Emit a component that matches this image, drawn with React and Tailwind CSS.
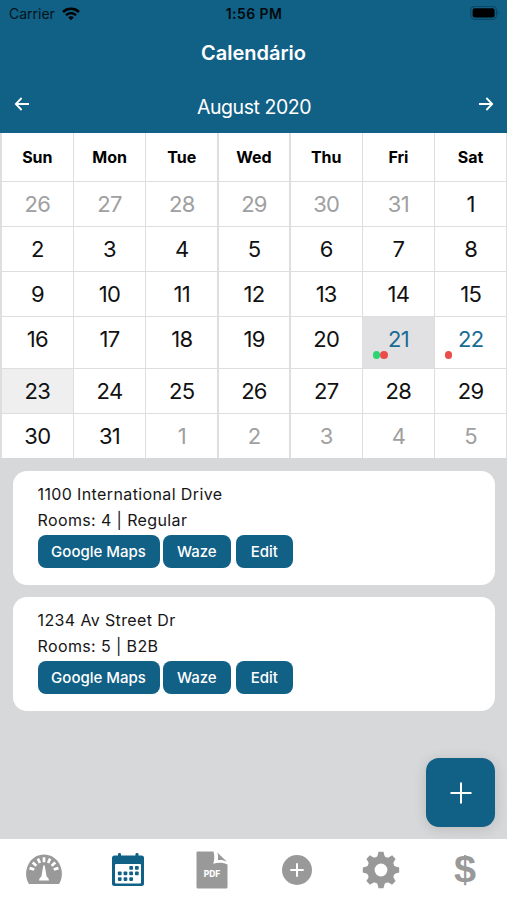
const weekDays = ["Sun", "Mon", "Tue", "Wed", "Thu", "Fri", "Sat"]

const weeks = [
  { height: "h-[45px]", days: [26, 27, 28, 29, 30, 31, 1] },
  { height: "h-[45px]", days: [2, 3, 4, 5, 6, 7, 8] },
  { height: "h-[45px]", days: [9, 10, 11, 12, 13, 14, 15] },
  { height: "h-[52px]", days: [16, 17, 18, 19, 20, 21, 22] },
  { height: "h-[45px]", days: [23, 24, 25, 26, 27, 28, 29] },
  { height: "h-[45px]", days: [30, 31, 1, 2, 3, 4, 5] },
]

const events = {
  21: ["bg-[#2ed573]", "bg-[#eb4d4b]"],
  22: ["bg-[#eb4d4b]"],
}

const appointments = [
  { address: "1100 International Drive", rooms: 4, type: "Regular" },
  { address: "1234 Av Street Dr", rooms: 5, type: "B2B" },
]

const StatusBar = () => (
  <div className="h-7 pl-[9px] pr-2 pb-px flex items-center justify-between text-black">
    <div className="w-40 flex items-center gap-[7px] text-[14px]">
      <span className="opacity-80">Carrier</span>
      <svg width="18" height="14" viewBox="0 0 18 14" fill="none" stroke="currentColor">
        <path d="M1 5C5.5 0.8 12.5 0.8 17 5" strokeWidth="2.5" />
        <path d="M4 8.2C6.9 5.6 11.1 5.6 14 8.2" strokeWidth="2.4" />
        <path d="M9 13.2L6.2 10.3C7.8 9 10.2 9 11.8 10.3Z" fill="currentColor" stroke="none" />
      </svg>
    </div>
    <span className="text-[14px] font-semibold tracking-[0.4px] opacity-90">1:56 PM</span>
    <div className="w-40 flex justify-end">
      <svg width="30" height="15" viewBox="0 0 30 15">
        <rect x="1.8" y="0.3" width="25.6" height="13" rx="4" fill="none" stroke="#0b4766" strokeWidth="1.2" />
        <rect x="3.6" y="2.2" width="22" height="9.3" rx="2.2" fill="#000" />
        <path d="M28.5 4.5C30 5.5 30 8.1 28.5 9.1Z" fill="#0b4766" />
      </svg>
    </div>
  </div>
)

const Arrow = ({ flip }) => (
  <svg width="16" height="14" viewBox="0 0 16 14" fill="none" stroke="white" strokeWidth="1.8" className={flip ? "rotate-180" : ""}>
    <path d="M15 7H2M7.6 1L1.8 7L7.6 13" />
  </svg>
)

const Day = ({ day, weekIndex }) => {
  const outside = (weekIndex === 0 && day > 20) || (weekIndex === 5 && day < 10)
  const dots = outside ? null : events[day]
  let color = "text-[#111111]"
  if (outside) color = "text-[#a0a0a0]"
  if (dots) color = "text-[#1a6a96]"
  let background = "bg-white"
  if (day === 21) background = "bg-[#e1e1e3]"
  if (day === 23) background = "bg-[#efefef]"

  return (
    <div className={`relative flex justify-center pt-[7px] text-[22px] leading-[30px] tracking-[-0.7px] ${background} ${color}`}>
      <span>{day}</span>
      {dots && (
        <div className="absolute left-[9.5px] top-[34px] flex">
          {dots.map((dot) => (
            <span key={dot} className={`w-[7.5px] h-[7.5px] rounded-full ${dot}`}></span>
          ))}
        </div>
      )}
    </div>
  )
}

const Appointment = ({ address, rooms, type }) => (
  <div className="h-[114px] rounded-[14px] bg-white pl-[25px] pt-[10px] text-[16px] leading-[26px] text-[#161616]">
    <p className="tracking-[0.38px]">{address}</p>
    <p className="tracking-[0.38px]">
      Rooms: {rooms} | {type}
    </p>
    <div className="pt-[1.5px] flex text-white text-[15px] font-medium">
      <button className="w-[122px] h-[33.5px] pt-px rounded-lg bg-[#116086]">Google Maps</button>
      <button className="w-[68.5px] h-[33.5px] pt-px ml-[3px] rounded-lg bg-[#116086]">Waze</button>
      <button className="w-[56.5px] h-[33.5px] pt-px ml-[5px] rounded-lg bg-[#116086]">Edit</button>
    </div>
  </div>
)

const GaugeIcon = () => (
  <svg width="38" height="38" viewBox="0 0 38 38">
    <path d="M3.4 32.3C-3.2 19 5 3.4 19 3.4S41.2 19 34.6 32.3Q34.2 33 33.4 33H4.6Q3.8 33 3.4 32.3Z" fill="#999" />
    <g stroke="white" strokeWidth="2.7">
      {[-74, -49, -24, 0, 24, 49, 74].map((angle) => (
        <path key={angle} d="M19 6.3V11.2" transform={`rotate(${angle} 19 21.3)`} />
      ))}
    </g>
    <path d="M18.3 14.5H19.7L21.6 25.5Q24 27 24 29.5H14Q14 27 16.4 25.5Z" fill="white" />
  </svg>
)

const CalendarIcon = () => (
  <svg width="34" height="36" viewBox="0 0 34 36">
    <g fill="#116086">
      <rect x="7" y="1" width="3" height="5" rx="1.2" />
      <rect x="24.5" y="1" width="3" height="5" rx="1.2" />
      <rect x="1" y="3.5" width="32" height="30.5" rx="2.5" />
    </g>
    <rect x="4" y="12" width="26" height="19.5" rx="1" fill="white" />
    <g fill="#116086">
      {[
        [18.3, 14], [24, 14],
        [6.9, 19.5], [12.6, 19.5], [18.3, 19.5], [24, 19.5],
        [6.9, 25.2], [12.6, 25.2], [18.3, 25.2],
      ].map(([x, y]) => (
        <rect key={`${x}-${y}`} x={x} y={y} width="3.7" height="3.7" rx="0.8" />
      ))}
    </g>
  </svg>
)

const PdfIcon = () => (
  <svg width="32" height="38" viewBox="0 0 32 38">
    <path d="M1.5 0.5H17.5C18.6 4.5 18.6 8.5 17.3 12.8C22 11.3 27.5 11.3 31.5 13.6V36Q31.5 37.5 30 37.5H2Q0.5 37.5 0.5 36V1.5Q0.5 0.5 1.5 0.5Z" fill="#999" />
    <path d="M21.3 1.5L31 10.8C28 9.2 25 8.8 21.8 9.2C22.3 6.5 22.2 4 21.3 1.5Z" fill="#999" />
    <text x="16" y="26" textAnchor="middle" fontSize="8.4" fontWeight="800" fill="white">PDF</text>
  </svg>
)

const PlusIcon = () => (
  <svg width="32" height="32" viewBox="0 0 32 32">
    <circle cx="16" cy="16" r="15" fill="#999" />
    <path d="M16 9.3V22.7M9.3 16H22.7" stroke="white" strokeWidth="2" />
  </svg>
)

const GearIcon = () => (
  <svg width="38" height="38" viewBox="-19 -19 38 38">
    <g fill="#999">
      <circle r="13.2" />
      {[0, 45, 90, 135, 180, 225, 270, 315].map((angle) => (
        <path key={angle} d="M-2.5 -18.2H2.5L3.4 -14.6Q3.8 -13.3 5.6 -12.6L4 -9H-4L-5.6 -12.6Q-3.8 -13.3 -3.4 -14.6Z" transform={`rotate(${angle})`} />
      ))}
    </g>
    <circle r="6.4" fill="white" />
  </svg>
)

const DollarIcon = () => (
  <span className="scale-x-110 font-['Liberation_Sans',sans-serif] text-[36px] leading-[38px] font-bold text-[#999]">$</span>
)

const tabs = [GaugeIcon, CalendarIcon, PdfIcon, PlusIcon, GearIcon, DollarIcon]

const App = () => {
  return (
    <div className="w-[507px] h-[900px] overflow-hidden flex flex-col bg-[#d6d8da] font-['Inter',sans-serif]">
      {/* Header */}
      <header className="h-[133px] shrink-0 bg-[#116086] text-white">
        <StatusBar />
        <h1 className="h-12 pt-px text-center text-[20px] leading-[48px] font-semibold">Calendário</h1>
        <div className="h-[57px] pl-[14px] pr-[13px] pb-[2px] flex items-center justify-between">
          <Arrow />
          <span className="pt-[8px] text-[19.5px] tracking-[-0.45px]">August 2020</span>
          <Arrow flip />
        </div>
      </header>

      {/* Calendar */}
      <div className="shrink-0 bg-[#dedede] px-px flex flex-col">
        <div className="h-[48px] pl-px grid grid-cols-7 gap-x-[1.5px]">
          {weekDays.map((name) => (
            <div key={name} className="bg-white text-center text-[16px] leading-[48px] font-bold text-black">
              {name}
            </div>
          ))}
        </div>
        {weeks.map((week, index) => (
          <div key={index} className={`${week.height} pl-px pt-[1.4px] grid grid-cols-7 gap-x-[1.5px]`}>
            {week.days.map((day) => (
              <Day key={day} day={day} weekIndex={index} />
            ))}
          </div>
        ))}
      </div>

      {/* Appointments */}
      <main className="relative flex-1 px-[12.5px] pt-[13px] flex flex-col gap-3">
        {appointments.map((item) => (
          <Appointment key={item.address} {...item} />
        ))}
        <button className="absolute right-[12px] bottom-[12px] w-[69px] h-[69px] rounded-[13px] bg-[#116086] shadow-[0_2px_14px_rgba(0,0,0,0.14)] flex items-center justify-center">
          <svg width="22" height="22" viewBox="0 0 22 22" stroke="white" strokeWidth="2">
            <path d="M11 0.5V21.5M0.5 11H21.5" />
          </svg>
        </button>
      </main>

      {/* Tab bar */}
      <nav className="h-[61px] shrink-0 pl-0.5 bg-white grid grid-cols-6">
        {tabs.map((Icon, index) => (
          <div key={index} className="flex items-center justify-center">
            <Icon />
          </div>
        ))}
      </nav>
    </div>
  )
}

export default App
